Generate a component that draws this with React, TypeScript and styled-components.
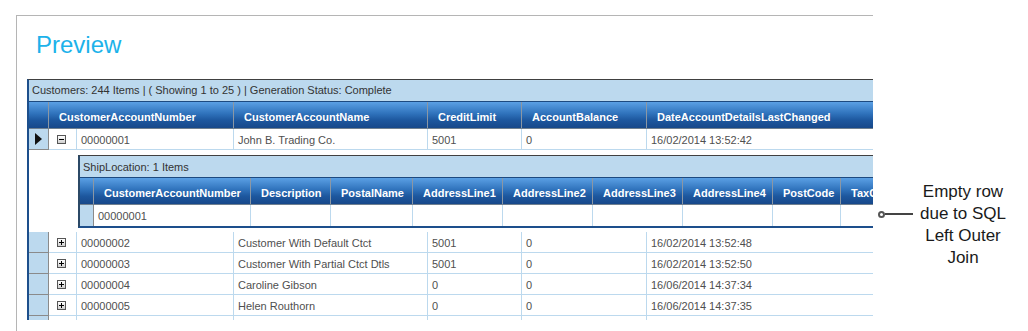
import React from 'react';
import styled, { createGlobalStyle } from 'styled-components';

const GlobalStyle = createGlobalStyle`
  body {
    margin: 0;
    background: #ffffff;
    font-family: "Liberation Sans", Arial, sans-serif;
  }
`;

type Column = { title: string; width: number };

const mainColumns: Column[] = [
  { title: 'CustomerAccountNumber', width: 185 },
  { title: 'CustomerAccountName', width: 194 },
  { title: 'CreditLimit', width: 94 },
  { title: 'AccountBalance', width: 125 },
  { title: 'DateAccountDetailsLastChanged', width: 260 },
];

// data cells: the first header spans the expander column (28) + number (157)
const mainCellWidths = [157, 194, 94, 125, 260];

const detailColumns: Column[] = [
  { title: 'CustomerAccountNumber', width: 157 },
  { title: 'Description', width: 80 },
  { title: 'PostalName', width: 82 },
  { title: 'AddressLine1', width: 90 },
  { title: 'AddressLine2', width: 90 },
  { title: 'AddressLine3', width: 90 },
  { title: 'AddressLine4', width: 90 },
  { title: 'PostCode', width: 68 },
  { title: 'TaxCode', width: 80 },
];

const customers = [
  ['00000001', 'John B. Trading Co.', '5001', '0', '16/02/2014 13:52:42'],
  ['00000002', 'Customer With Default Ctct', '5001', '0', '16/02/2014 13:52:48'],
  ['00000003', 'Customer With Partial Ctct Dtls', '5001', '0', '16/02/2014 13:52:50'],
  ['00000004', 'Caroline Gibson', '0', '0', '16/06/2014 14:37:34'],
  ['00000005', 'Helen Routhorn', '0', '0', '16/06/2014 14:37:35'],
  // next row only peeks in under the fold, its text is out of view
  ['', '', '', '', ''],
];

const App: React.FC = () => {
  const [first, ...rest] = customers;

  return (
    <Page>
      <GlobalStyle />
      <Panel>
        <Title>Preview</Title>
        <GridClip>
          <Grid>
            <GroupBar>Customers: 244 Items | ( Showing 1 to 25 ) | Generation Status: Complete</GroupBar>
            <HeaderRow>
              <HeaderCell $w={20} />
              {mainColumns.map((c) => (
                <HeaderCell key={c.title} $w={c.width}>{c.title}</HeaderCell>
              ))}
            </HeaderRow>

            <Row>
              <Indicator $w={20}>
                <Arrow />
              </Indicator>
              <ExpanderCell>
                <Toggle>
                  <Bar />
                </Toggle>
              </ExpanderCell>
              {first.map((v, i) => (
                <Cell key={i} $w={mainCellWidths[i]}>{v}</Cell>
              ))}
            </Row>

            <DetailSection>
              <Grid>
                <DetailGroupBar>ShipLocation: 1 Items</DetailGroupBar>
                <HeaderRow>
                  <HeaderCell $w={14} />
                  {detailColumns.map((c) => (
                    <HeaderCell key={c.title} $w={c.width}>{c.title}</HeaderCell>
                  ))}
                </HeaderRow>
                <Row>
                  <Indicator $w={14} $last />
                  {detailColumns.map((c, i) => (
                    <Cell key={c.title} $w={c.width} $last>{i === 0 ? '00000001' : ''}</Cell>
                  ))}
                </Row>
              </Grid>
            </DetailSection>

            {rest.map((r, n) => (
              <Row key={n}>
                <Indicator $w={20} />
                <ExpanderCell>
                  <Toggle>
                    <Bar />
                    <Bar $vertical />
                  </Toggle>
                </ExpanderCell>
                {r.map((v, i) => (
                  <Cell key={i} $w={mainCellWidths[i]}>{v}</Cell>
                ))}
              </Row>
            ))}
          </Grid>
        </GridClip>
      </Panel>

      <Aside>
        <Connector>
          <Dot />
          <Line />
        </Connector>
        <Note>
          Empty row
          <br />
          due to SQL
          <br />
          Left Outer
          <br />
          Join
        </Note>
      </Aside>
    </Page>
  );
};

export default App;

const Page = styled.div`
  display: flex;
  align-items: flex-start;
  width: 1028px;
  height: 331px;
  overflow: hidden;
  background: #ffffff;
`;

const Panel = styled.div`
  flex: none;
  box-sizing: border-box;
  width: 857px;
  height: 316px;
  margin: 15px 0 0 16px;
  border-top: 1px solid #b5b5b5;
  border-left: 1px solid #b5b5b5;
  overflow: hidden;
`;

const Title = styled.h1`
  margin: 15px 0 20px 19px;
  font-family: "Liberation Sans", Arial, sans-serif;
  font-size: 24px;
  line-height: 28px;
  font-weight: normal;
  color: #1cb2ea;
`;

const GridClip = styled.div`
  height: 241px;
  margin-left: 10px;
  overflow: hidden;
`;

const Grid = styled.div`
  width: 1000px;
  border-top: 1px solid #404040;
  border-left: 2px solid #1d4f8c;
  font-size: 11px;
`;

const GroupBar = styled.div`
  height: 21px;
  padding-left: 3px;
  background: #bcd9ee;
  color: #333333;
  line-height: 20px;
  white-space: nowrap;
`;

const DetailGroupBar = styled(GroupBar)`
  line-height: 22px;
`;

const HeaderRow = styled.div`
  display: flex;
  box-sizing: border-box;
  height: 28px;
  border-top: 1px solid #1d4a80;
  border-bottom: 1px solid #6f7f8f;
  background: linear-gradient(#5ba0e4 0%, #2f72bb 45%, #1d579e 70%, #17488a 100%);
`;

const HeaderCell = styled.div<{ $w: number }>`
  flex: none;
  display: flex;
  align-items: center;
  box-sizing: border-box;
  width: ${(p) => p.$w}px;
  padding: 4px 0 0 10px;
  border-right: 1px solid #8b97a4;
  color: #ffffff;
  font-weight: bold;
  line-height: 13px;
  white-space: nowrap;
  overflow: hidden;
`;

const Row = styled.div`
  display: flex;
  height: 21px;
`;

const Cell = styled.div<{ $w: number; $last?: boolean }>`
  flex: none;
  box-sizing: border-box;
  width: ${(p) => p.$w}px;
  height: 21px;
  padding: 1px 0 0 4px;
  border-right: 1px solid #bcd9ee;
  border-bottom: ${(p) => (p.$last ? 'none' : '1px solid #bcd9ee')};
  color: #4f4f4f;
  line-height: 20px;
  white-space: nowrap;
  overflow: hidden;
`;

const Indicator = styled.div<{ $w: number; $last?: boolean }>`
  flex: none;
  display: flex;
  align-items: center;
  justify-content: center;
  box-sizing: border-box;
  width: ${(p) => p.$w}px;
  height: 21px;
  background: #bcd9ee;
  border-right: 1px solid #8a8a8a;
  border-bottom: ${(p) => (p.$last ? 'none' : '1px solid #8a8a8a')};
`;

const Arrow = styled.span`
  width: 0;
  height: 0;
  border-top: 6px solid transparent;
  border-bottom: 6px solid transparent;
  border-left: 7px solid #111111;
`;

const ExpanderCell = styled.div`
  flex: none;
  display: flex;
  align-items: center;
  box-sizing: border-box;
  width: 28px;
  height: 21px;
  padding-left: 8px;
  border-right: 1px solid #bcd9ee;
  border-bottom: 1px solid #bcd9ee;
`;

const Toggle = styled.span`
  position: relative;
  box-sizing: border-box;
  width: 9px;
  height: 9px;
  border: 1px solid #555555;
  background: linear-gradient(#ffffff, #cfcfcf);
`;

const Bar = styled.span<{ $vertical?: boolean }>`
  position: absolute;
  background: #000000;
  left: ${(p) => (p.$vertical ? '3px' : '1px')};
  top: ${(p) => (p.$vertical ? '1px' : '3px')};
  width: ${(p) => (p.$vertical ? '1px' : '5px')};
  height: ${(p) => (p.$vertical ? '5px' : '1px')};
`;

const DetailSection = styled.div`
  padding: 5px 0 4px 49px;
  background: #ffffff;

  & > ${Grid} {
    border-left: 2px solid #2b4866;
    border-bottom: 2px solid #1d4f8c;
  }
`;

const Aside = styled.div`
  flex: none;
  display: flex;
  align-items: flex-start;
  padding: 181px 0 0 5px;
`;

const Connector = styled.div`
  display: flex;
  align-items: center;
  height: 22px;
  margin-top: 22px;
`;

const Dot = styled.span`
  box-sizing: border-box;
  width: 7px;
  height: 7px;
  border: 2px solid #555555;
  border-radius: 50%;
  background: #ffffff;
`;

const Line = styled.span`
  width: 28px;
  height: 2px;
  background: #444444;
`;

const Note = styled.div`
  width: 100px;
  font-family: "Liberation Sans", Arial, sans-serif;
  font-size: 17px;
  line-height: 22px;
  color: #1a1a1a;
  text-align: center;
`;
